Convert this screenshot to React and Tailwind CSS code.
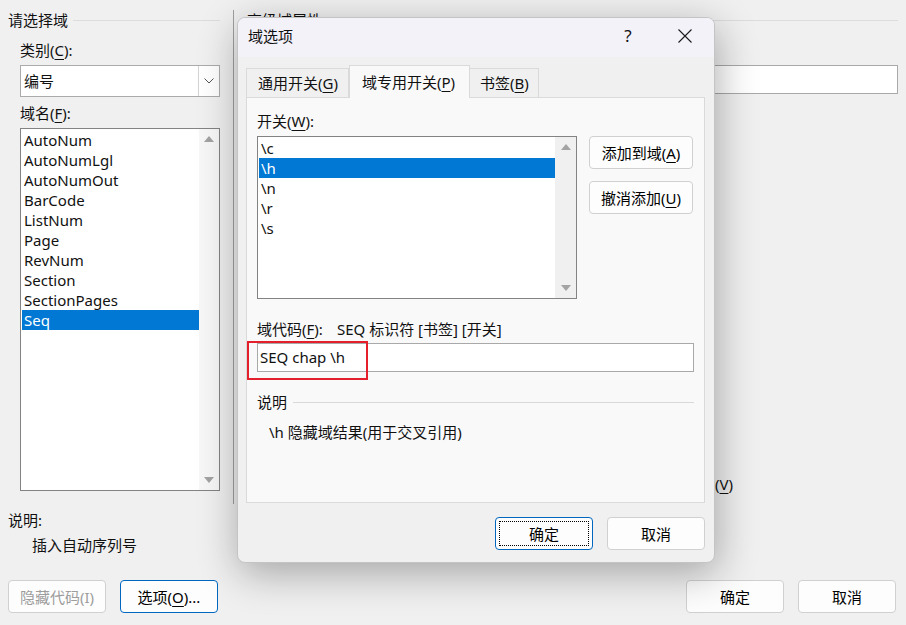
import React from 'react';

const FONT = "font-['Noto_Sans','Noto_Sans_CJK_SC',sans-serif]";

function U({ children }) {
  return <span className="underline underline-offset-[3px] decoration-1">{children}</span>;
}

function UpArrow() {
  return (
    <svg width="10" height="6" viewBox="0 0 10 6"><path d="M0 6 L5 0 L10 6 Z" fill="#a3a3a3" /></svg>
  );
}

function DownArrow() {
  return (
    <svg width="10" height="6" viewBox="0 0 10 6"><path d="M0 0 L10 0 L5 6 Z" fill="#a3a3a3" /></svg>
  );
}

function Button({ children, className = '', focus = false, dotted = false, disabled = false }) {
  return (
    <button
      className={
        'relative h-[33px] w-[98px] rounded-[4px] border bg-[#fdfdfd] text-[15px] leading-5 flex items-center justify-center ' +
        (focus ? 'border-[#0067c0] ' : 'border-[#d0d0d0] ') +
        (disabled ? 'text-[#9d9d9d] bg-[#f7f7f7] ' : 'text-black ') +
        className
      }
    >
      {dotted && <span className="absolute inset-[3px] border border-dotted border-black" />}
      {children}
    </button>
  );
}

const fields = ['AutoNum', 'AutoNumLgl', 'AutoNumOut', 'BarCode', 'ListNum', 'Page', 'RevNum', 'Section', 'SectionPages', 'Seq'];
const switches = ['\\c', '\\h', '\\n', '\\r', '\\s'];

function OptionsDialog() {
  return (
    <div className="absolute left-[237px] top-[17px] w-[478px] h-[546px] rounded-lg border border-[#c4c4c4] bg-[#f0f0f0] overflow-hidden shadow-[2px_10px_40px_rgba(0,0,0,0.32)]">
      {/* title bar */}
      <div className="h-[39px] bg-[#f3f2f9] flex items-center pl-[10px] pb-[4px]">
        <span className="leading-5">域选项</span>
        <div className="ml-auto flex items-center pr-[6px]">
          <div className="w-[46px] h-8 flex items-center justify-center text-[17px]">?</div>
          <div className="w-[46px] h-8 ml-[11px] flex items-center justify-center">
            <svg width="14" height="14" viewBox="0 0 14 14">
              <path d="M0.5 0.5 L13.5 13.5 M13.5 0.5 L0.5 13.5" stroke="#1a1a1a" strokeWidth="1.1" />
            </svg>
          </div>
        </div>
      </div>

      <div className="pl-[8px] pr-[9px] pt-[8px]">
        {/* tabs */}
        <div className="flex items-end h-8">
          <div className="h-[29px] w-[103px] border border-b-0 border-[#dadada] bg-[#f0f0f0] flex items-center pl-[11px] leading-5">
            通用开关(<U>G</U>)
          </div>
          <div className="relative z-10 h-[33px] -mb-px w-[121px] border border-b-0 border-[#dadada] bg-[#f9f9f9] flex items-center pl-[12px] leading-5">
            域专用开关(<U>P</U>)
          </div>
          <div className="h-[29px] w-[69px] border border-b-0 border-l-0 border-[#dadada] bg-[#f0f0f0] flex items-center pl-[10px] leading-5">
            书签(<U>B</U>)
          </div>
        </div>

        {/* panel */}
        <div className="relative h-[406px] border border-[#dadada] bg-[#f9f9f9] pl-[10px]">
          <div className="mt-[13px] leading-5">开关(<U>W</U>):</div>
          <div className="mt-[5px] flex">
            <div className="w-[320px] h-[163px] border border-[#838383] bg-white flex">
              <div className="flex-1 pt-px pl-px">
                {switches.map((s) => (
                  <div
                    key={s}
                    className={'h-5 leading-5 pl-[2px] ' + (s === '\\h' ? 'bg-[#0078d4] text-white' : '')}
                  >
                    {s}
                  </div>
                ))}
              </div>
              <div className="w-[21px] bg-[#f0f0f0] flex flex-col items-center justify-between py-[7px]">
                <UpArrow />
                <DownArrow />
              </div>
            </div>
            <div className="ml-[12px] flex flex-col gap-[12px]">
              <Button className="w-[104px]">添加到域(<U>A</U>)</Button>
              <Button className="w-[104px]">撤消添加(<U>U</U>)</Button>
            </div>
          </div>

          <div className="mt-[20px] leading-5 flex">
            <span className="w-[80px]">域代码(<U>F</U>):</span>
            <span>SEQ 标识符 [书签] [开关]</span>
          </div>
          <div className="mt-[4px] w-[437px] h-[29px] border border-[#a9a9a9] bg-white flex items-center pl-[2px] pb-px">
            SEQ chap \h
          </div>
          <div className="absolute left-0 top-[243px] w-[121px] h-[39px] border-2 border-[#e3202b]" />

          <div className="mt-[20px] flex items-center leading-5">
            <span>说明</span>
            <div className="ml-[6px] w-[401px] h-px bg-[#d9d9d9]" />
          </div>
          <div className="mt-[10px] pl-[12px] leading-5">\h 隐藏域结果(用于交叉引用)</div>
        </div>

        {/* footer */}
        <div className="mt-[14px] flex justify-end gap-[14px]">
          <Button focus dotted>确定</Button>
          <Button>取消</Button>
        </div>
      </div>
    </div>
  );
}

export default function App() {
  return (
    <div className={'relative w-[906px] h-[625px] overflow-hidden bg-[#f0f0f0] text-[15px] text-[#111] ' + FONT}>
      <div className="flex h-[500px] pt-[10px]">
        {/* left column */}
        <div className="w-[220px] pl-2 shrink-0">
          <div className="flex items-center leading-5">
            <span>请选择域</span>
            <div className="flex-1 ml-[5px] h-px bg-[#dcdcdc]" />
          </div>
          <div className="mt-[10px] pl-3 leading-5">类别(<U>C</U>):</div>
          <div className="mt-[5px] ml-3 h-8 border border-[#ababab] bg-white flex">
            <div className="flex-1 pl-[3px] flex items-center">编号</div>
            <div className="w-[21px] border-l border-[#d4d4d4] flex items-center justify-center">
              <svg width="10" height="6" viewBox="0 0 10 6">
                <path d="M0.5 0.5 L5 5 L9.5 0.5" fill="none" stroke="#555" strokeWidth="1" />
              </svg>
            </div>
          </div>
          <div className="mt-[6px] pl-3 leading-5">域名(<U>F</U>):</div>
          <div className="mt-[5px] ml-3 h-[363px] border border-[#838383] bg-white flex">
            <div className="flex-1 pt-px pl-px">
              {fields.map((f) => (
                <div key={f} className={'h-5 leading-5 pl-[2px] ' + (f === 'Seq' ? 'bg-[#0078d4] text-white' : '')}>
                  {f}
                </div>
              ))}
            </div>
            <div className="w-[20px] bg-[#f7f7f7] flex flex-col items-center justify-between py-[7px]">
              <UpArrow />
              <DownArrow />
            </div>
          </div>
        </div>

        {/* divider */}
        <div className="ml-[13px] w-px h-[494px] bg-[#a0a0a0] shrink-0" />

        {/* right column */}
        <div className="flex-1 pl-[13px] pr-2">
          <div className="flex items-center leading-5">
            <span>高级域属性</span>
            <div className="flex-1 ml-[5px] h-px bg-[#dcdcdc]" />
          </div>
          <div className="mt-[10px] leading-5">域代码(<U>I</U>):</div>
          <div className="mt-[5px] h-[29px] border border-[#a9a9a9] bg-white" />
          <div className="mt-[380px] w-[486px] flex justify-end leading-5">
            更新时保留原格式(<U>V</U>)
          </div>
        </div>
      </div>

      {/* bottom area */}
      <div className="mt-[10px] pl-2 leading-5">说明:</div>
      <div className="mt-[5px] pl-8 leading-5">插入自动序列号</div>
      <div className="mt-[25px] flex justify-between pl-2 pr-[10px]">
        <div className="flex gap-[14px]">
          <Button disabled>隐藏代码(I)</Button>
          <Button focus>选项(<U>O</U>)...</Button>
        </div>
        <div className="flex gap-[14px]">
          <Button>确定</Button>
          <Button>取消</Button>
        </div>
      </div>

      <OptionsDialog />
    </div>
  );
}
